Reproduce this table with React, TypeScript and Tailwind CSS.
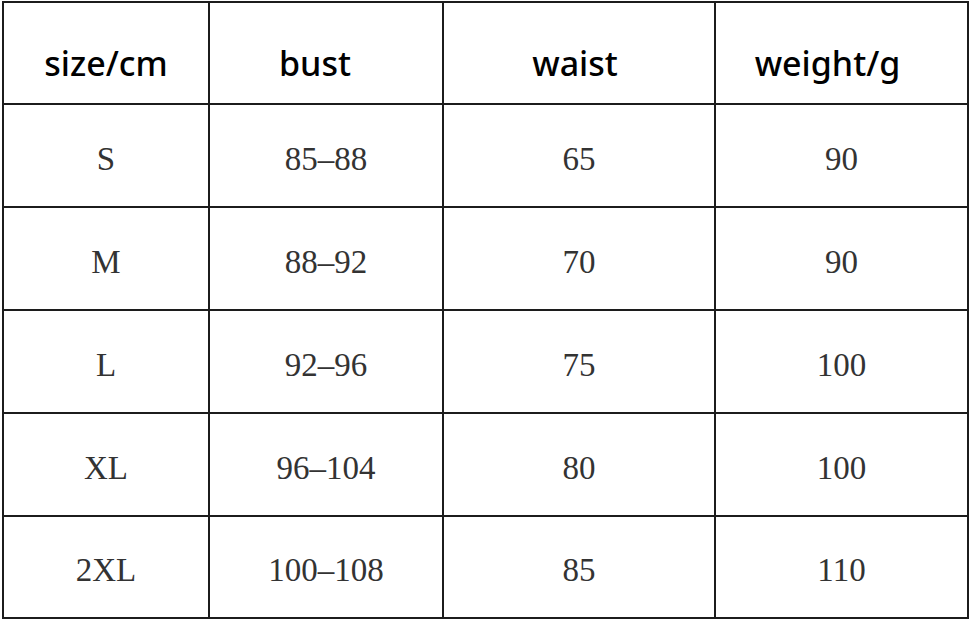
const HEAD = [
  { label: "size/cm", pad: "pr-0" },
  { label: "bust", pad: "pr-[22px]" },
  { label: "waist", pad: "pr-[8px]" },
  { label: "weight/g", pad: "pr-[28px]" },
];

const ROWS = [
  ["S", "85–88", "65", "90"],
  ["M", "88–92", "70", "90"],
  ["L", "92–96", "75", "100"],
  ["XL", "96–104", "80", "100"],
  ["2XL", "100–108", "85", "110"],
];

export default function App() {
  return (
    <main className="min-h-screen w-full bg-white pl-[2px] pt-[1px]">
      <div className="grid w-[967px] grid-cols-[204px_232px_270px_251px] grid-rows-[100px_101px_101px_101px_101px_100px] gap-[2px] bg-[#1c1c1c] p-[2px]">
        {HEAD.map((h) => (
          <div
            key={h.label}
            className={`flex items-center justify-center bg-white pt-[20px] ${h.pad} font-['Noto_Sans','Open_Sans',sans-serif] text-[34px] font-medium text-black`}
          >
            {h.label}
          </div>
        ))}
        {ROWS.map((r) =>
          r.map((v, i) => (
            <div
              key={r[0] + i}
              className="flex items-center justify-center bg-white pt-[8px] font-['Liberation_Serif',serif] text-[33px] text-[#333]"
            >
              {v}
            </div>
          ))
        )}
      </div>
    </main>
  );
}
